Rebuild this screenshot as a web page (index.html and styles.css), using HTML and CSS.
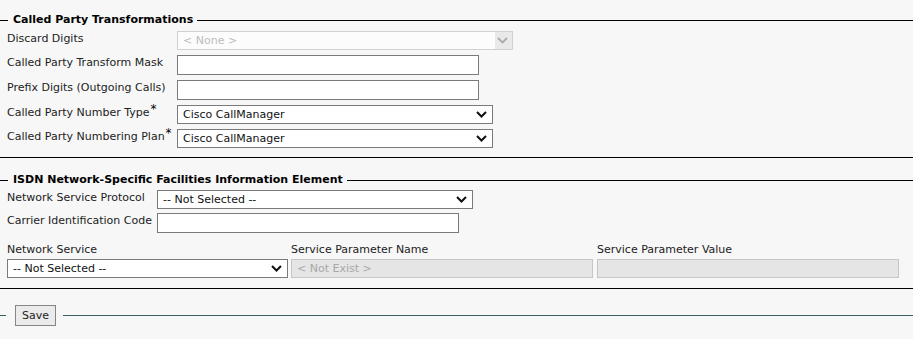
FILE: index.html
```html
<!DOCTYPE html>
<html lang="en">

<head>
    <meta charset="UTF-8">
    <meta name="viewport" content="width=device-width, initial-scale=1.0">
    <title>Route Pattern Configuration</title>
    <link rel="stylesheet" href="styles.css">
</head>

<body>
    <fieldset class="group group-called">
        <legend>Called Party Transformations</legend>
        <div class="row">
            <label class="label">Discard Digits</label>
            <select class="field select-off w-336" disabled>
                <option>&lt; None &gt;</option>
            </select>
        </div>
        <div class="row">
            <label class="label">Called Party Transform Mask</label>
            <input class="field text w-302" type="text">
        </div>
        <div class="row">
            <label class="label">Prefix Digits (Outgoing Calls)</label>
            <input class="field text w-302" type="text">
        </div>
        <div class="row">
            <label class="label">Called Party Number Type<span class="req">*</span></label>
            <select class="field select w-316">
                <option>Cisco CallManager</option>
            </select>
        </div>
        <div class="row">
            <label class="label">Called Party Numbering Plan<span class="req">*</span></label>
            <select class="field select w-316">
                <option>Cisco CallManager</option>
            </select>
        </div>
    </fieldset>

    <fieldset class="group group-isdn">
        <legend>ISDN Network-Specific Facilities Information Element</legend>
        <div class="row">
            <label class="label">Network Service Protocol</label>
            <select class="field select w-316">
                <option>-- Not Selected --</option>
            </select>
        </div>
        <div class="row">
            <label class="label">Carrier Identification Code</label>
            <input class="field text w-302" type="text">
        </div>
        <div class="params">
            <span class="param-label">Network Service</span>
            <span class="param-label">Service Parameter Name</span>
            <span class="param-label">Service Parameter Value</span>
            <select class="field select w-281">
                <option>-- Not Selected --</option>
            </select>
            <input class="field text-off w-302" type="text" value="&lt; Not Exist &gt;" disabled>
            <input class="field text-off w-302" type="text" disabled>
        </div>
    </fieldset>

    <fieldset class="actions">
        <legend><button class="btn" type="button">Save</button></legend>
    </fieldset>
</body>

</html>
```

FILE: styles.css
```css
* {
    box-sizing: border-box;
}

body {
    margin: 0;
    background-color: #f7f7f7;
    color: #222;
    font-family: "DejaVu Sans", Verdana, sans-serif;
    font-size: 11px;
}

/* section boxes: only top and bottom rules */
.group {
    min-width: 0;
    margin: 0;
    border: 0;
    border-top: 1px solid #000;
    border-bottom: 1px solid #000;
}

.group legend {
    margin-left: 8px;
    padding: 0 4px 0 5px;
    font-weight: bold;
    line-height: 14px;
    color: #000;
}

.group-called {
    margin-top: 13px;
    padding: 4px 0 9px;
}

.group-isdn {
    margin-top: 15px;
    padding: 3px 0 10px;
}

.row {
    display: flex;
    align-items: flex-start;
    padding-left: 7px;
}

.group-called .row + .row {
    margin-top: 5px;
}

.group-isdn .row + .row {
    margin-top: 4px;
}

.label {
    flex-shrink: 0;
    width: 170px;
    padding-top: 1px;
    line-height: 13px;
}

.group-isdn .label {
    width: 150px;
}

.req {
    position: relative;
    top: -3px;
    margin-left: 1px;
    font-size: 12px;
    color: #000;
}

/* form controls */
.field {
    margin: 0;
    height: 19px;
    font-family: inherit;
    font-size: 11px;
    color: #111;
    border-radius: 0;
    outline: none;
}

.text {
    height: 20px;
    padding: 0 4px;
    background-color: #fff;
    border: 1px solid #7a7a7a;
}

.select {
    appearance: none;
    padding: 0 20px 0 5px;
    border: 1px solid #7a7a7a;
    background: #fff url("data:image/svg+xml,%3Csvg xmlns='http://www.w3.org/2000/svg' width='11' height='7'%3E%3Cpath d='M1 1l4.5 4.5L10 1' fill='none' stroke='%23111' stroke-width='2'/%3E%3C/svg%3E") no-repeat right 5px center;
}

.select-off {
    appearance: none;
    padding: 0 20px 0 5px;
    color: #a3a3a3;
    border: 1px solid #c2c2c2;
    background:
        url("data:image/svg+xml,%3Csvg xmlns='http://www.w3.org/2000/svg' width='11' height='7'%3E%3Cpath d='M1 1l4.5 4.5L10 1' fill='none' stroke='%23858a94' stroke-width='1.8'/%3E%3C/svg%3E") no-repeat right 4px center,
        linear-gradient(to left, #e4e4e4 17px, #fff 17px);
}

.text-off {
    padding: 0 5px;
    color: #a8a8a8;
    background-color: #e5e5e5;
    border: 1px solid #c6c6c6;
}

.w-336 { width: 336px; }
.w-316 { width: 316px; }
.w-302 { width: 302px; }
.w-281 { width: 281px; }

/* service parameter table */
.params {
    display: grid;
    grid-template-columns: 284px 306px 1fr;
    row-gap: 3px;
    margin-top: 10px;
    padding-left: 7px;
}

.param-label {
    line-height: 13px;
}

/* save bar */
.actions {
    min-width: 0;
    margin: 16px 0 0;
    padding: 0;
    border: 0;
    border-top: 1px solid #3f5f5f;
}

.actions legend {
    margin-left: 6px;
    padding: 0 7px 0 9px;
}

.btn {
    display: block;
    width: 41px;
    height: 21px;
    padding: 0;
    font-family: inherit;
    font-size: 11px;
    color: #222;
    background-color: #ebebeb;
    border: 1px solid #868686;
    border-radius: 0;
}
```
